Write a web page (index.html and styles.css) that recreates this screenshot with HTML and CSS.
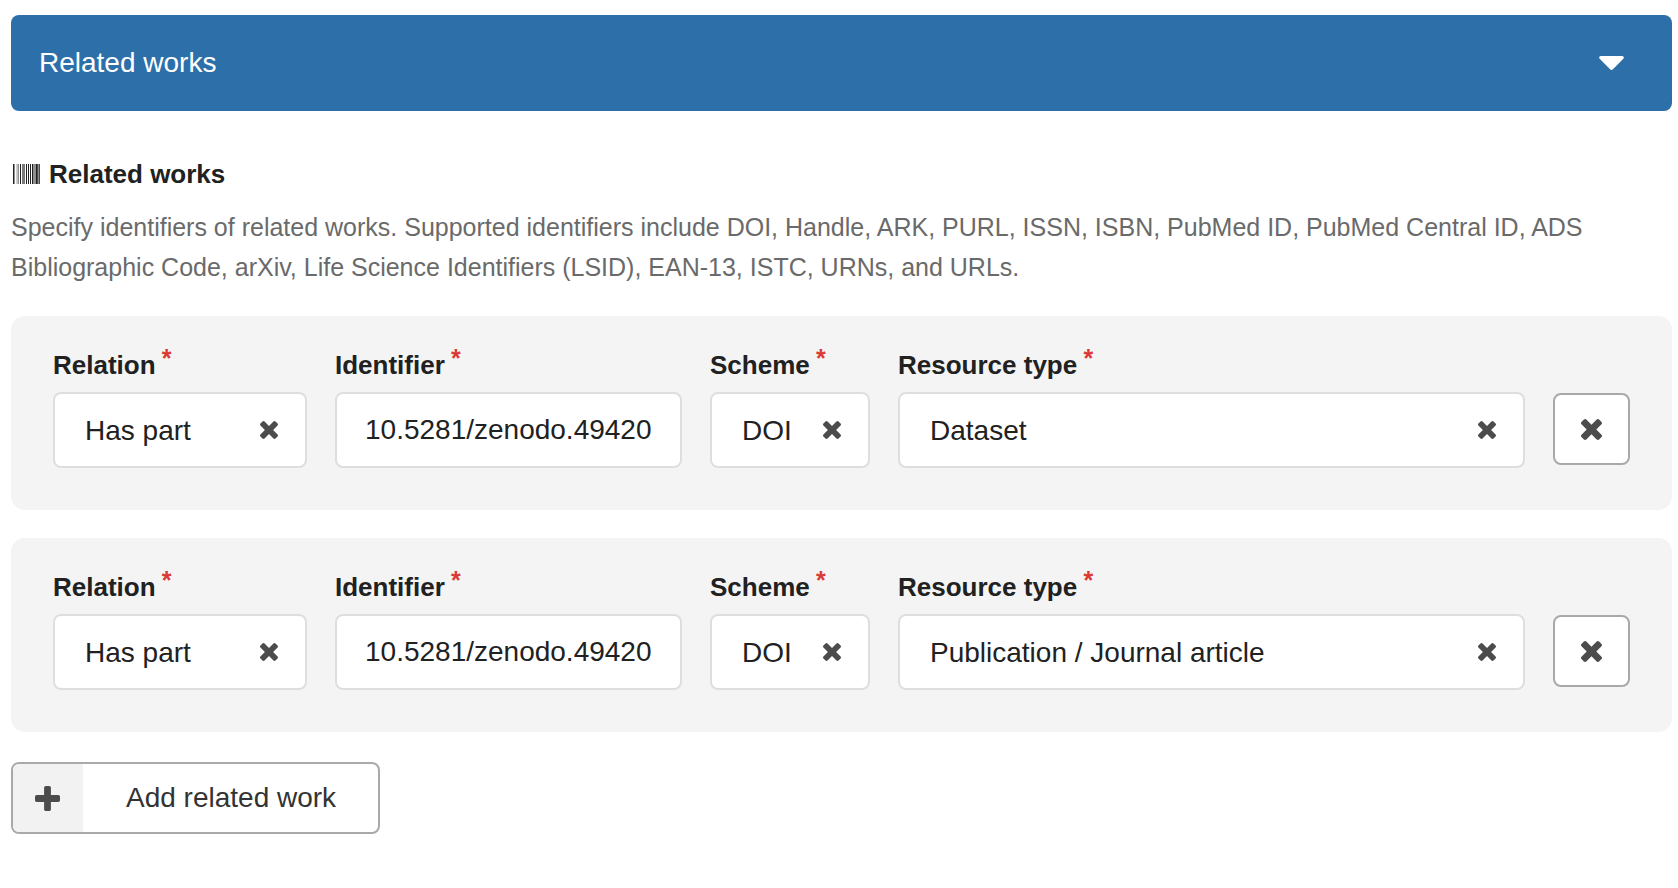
FILE: index.html
```
<!DOCTYPE html>
<html lang="en">

<head>
    <meta charset="UTF-8">
    <meta name="viewport" content="width=device-width, initial-scale=1.0">
    <title>Related works</title>
    <link rel="stylesheet" href="styles.css">
</head>

<body>
    <!-- Shared icons -->
    <svg class="sprite" aria-hidden="true">
        <symbol id="times" viewBox="302 366 1188 1188">
            <path d="M1490 1322q0 40-28 68l-136 136q-28 28-68 28t-68-28l-294-294-294 294q-28 28-68 28t-68-28l-136-136q-28-28-28-68t28-68l294-294-294-294q-28-28-28-68t28-68l136-136q28-28 68-28t68 28l294 294 294-294q28-28 68-28t68 28l136 136q28 28 28 68t-28 68l-294 294 294 294q28 28 28 68z" />
        </symbol>
        <symbol id="plus" viewBox="192 128 1408 1408">
            <path d="M1600 736v192q0 40-28 68t-68 28h-416v416q0 40-28 68t-68 28h-192q-40 0-68-28t-28-68v-416h-416q-40 0-68-28t-28-68v-192q0-40 28-68t68-28h416v-416q0-40 28-68t68-28h192q40 0 68 28t28 68v416h416q40 0 68 28t28 68z" />
        </symbol>
    </svg>

    <button class="header" type="button" aria-expanded="true">
        <span>Related works</span>
        <svg class="caret" viewBox="11 192 298 169" aria-hidden="true">
            <path d="M31.3 192h257.3c17.8 0 26.7 21.5 14.1 34.1L174.1 354.7c-7.8 7.8-20.5 7.8-28.3 0L17.2 226.1C4.6 213.5 13.5 192 31.3 192z" />
        </svg>
    </button>

    <main>
        <h2 class="title">
            <svg class="barcode" viewBox="0 0 27 20" aria-hidden="true">
                <path d="M0 0h1v20h-1zM1.5 0h.5v20h-.5zM3.8 0h.5v20h-.5zM5.2 0h.5v20h-.5zM7 0h1v20h-1zM9.2 0h.6v20h-.6zM10.2 0h.6v20h-.6zM11.2 0h.6v20h-.6zM13 0h1v20h-1zM15 0h1v20h-1zM17 0h1v20h-1zM19 0h1v20h-1zM20.4 0h.5v20h-.5zM21.5 0h1v20h-1zM23 0h1.8v20h-1.8zM25.3 0h.5v20h-.5zM26.2 0h.8v20h-.8z" />
            </svg>
            Related works
        </h2>
        <p class="help">Specify identifiers of related works. Supported identifiers include DOI, Handle, ARK, PURL, ISSN, ISBN, PubMed ID, PubMed Central ID, ADS Bibliographic Code, arXiv, Life Science Identifiers (LSID), EAN-13, ISTC, URNs, and URLs.</p>

        <div class="work">
            <div class="field">
                <label for="relation1">Relation <span class="required">*</span></label>
                <div class="dropdown">
                    <select id="relation1"><option>Has part</option></select>
                    <button class="clear" type="button" aria-label="Clear relation"><svg><use href="#times" /></svg></button>
                </div>
            </div>
            <div class="field">
                <label for="identifier1">Identifier <span class="required">*</span></label>
                <input id="identifier1" type="text" value="10.5281/zenodo.49420">
            </div>
            <div class="field">
                <label for="scheme1">Scheme <span class="required">*</span></label>
                <div class="dropdown">
                    <select id="scheme1"><option>DOI</option></select>
                    <button class="clear" type="button" aria-label="Clear scheme"><svg><use href="#times" /></svg></button>
                </div>
            </div>
            <div class="field">
                <label for="type1">Resource type <span class="required">*</span></label>
                <div class="dropdown">
                    <select id="type1"><option>Dataset</option></select>
                    <button class="clear" type="button" aria-label="Clear resource type"><svg><use href="#times" /></svg></button>
                </div>
            </div>
            <button class="remove" type="button" aria-label="Remove related work"><svg><use href="#times" /></svg></button>
        </div>

        <div class="work">
            <div class="field">
                <label for="relation2">Relation <span class="required">*</span></label>
                <div class="dropdown">
                    <select id="relation2"><option>Has part</option></select>
                    <button class="clear" type="button" aria-label="Clear relation"><svg><use href="#times" /></svg></button>
                </div>
            </div>
            <div class="field">
                <label for="identifier2">Identifier <span class="required">*</span></label>
                <input id="identifier2" type="text" value="10.5281/zenodo.49420">
            </div>
            <div class="field">
                <label for="scheme2">Scheme <span class="required">*</span></label>
                <div class="dropdown">
                    <select id="scheme2"><option>DOI</option></select>
                    <button class="clear" type="button" aria-label="Clear scheme"><svg><use href="#times" /></svg></button>
                </div>
            </div>
            <div class="field">
                <label for="type2">Resource type <span class="required">*</span></label>
                <div class="dropdown">
                    <select id="type2"><option>Publication / Journal article</option></select>
                    <button class="clear" type="button" aria-label="Clear resource type"><svg><use href="#times" /></svg></button>
                </div>
            </div>
            <button class="remove" type="button" aria-label="Remove related work"><svg><use href="#times" /></svg></button>
        </div>

        <button class="add" type="button">
            <span class="add-icon"><svg><use href="#plus" /></svg></span>
            <span class="add-text">Add related work</span>
        </button>
    </main>
</body>

</html>
```
FILE: styles.css
```
:root {
    --primary: #2d6fa8;
    --text: #212121;
    --muted: #6a6a6a;
    --icon: #4c4c4c;
    --panel: #f4f4f4;
    --border: #dededf;
    --button-border: #a9a9a9;
    --required: #db3a34;
}

* {
    box-sizing: border-box;
}

body {
    margin: 0;
    padding: 15px 6px 15px 11px;
    background-color: #fff;
    color: var(--text);
    font-family: "Liberation Sans", Arial, sans-serif;
    font-size: 26px;
}

button,
input,
select {
    font-family: inherit;
    font-size: 28px;
    color: var(--text);
    background-color: #fff;
}

button {
    padding: 0;
    cursor: pointer;
}

svg {
    display: block;
    fill: currentColor;
}

.sprite {
    display: none;
}

.header {
    display: flex;
    align-items: center;
    justify-content: space-between;
    width: 100%;
    height: 96px;
    padding: 0 48px 0 28px;
    border: none;
    border-radius: 8px;
    background-color: var(--primary);
    color: #fff;
    line-height: 34px;
}

.caret {
    width: 25px;
    height: 14px;
}

.title {
    display: flex;
    align-items: center;
    gap: 9px;
    margin: 47px 0 17px;
    padding-left: 2px;
    font-size: 26px;
    line-height: 32px;
}

.barcode {
    width: 27px;
    height: 20px;
}

.help {
    margin: 0 0 29px;
    color: var(--muted);
    font-size: 25px;
    line-height: 40px;
}

.work {
    display: grid;
    grid-template-columns: 254fr 347fr 160fr 627fr 77px;
    gap: 28px;
    align-items: end;
    margin-bottom: 28px;
    padding: 30px 42px 42px;
    border-radius: 14px;
    background-color: var(--panel);
}

.field {
    min-width: 0;
}

label {
    display: block;
    height: 36px;
    margin-bottom: 10px;
    font-weight: bold;
    line-height: 36px;
    white-space: nowrap;
}

.required {
    margin-left: -1px;
    color: var(--required);
    font-size: 25px;
    line-height: 1;
    vertical-align: 7px;
}

.dropdown {
    position: relative;
}

input,
select {
    display: block;
    width: 100%;
    height: 76px;
    padding: 0 28px;
    border: 2px solid var(--border);
    border-radius: 8px;
    appearance: none;
}

select {
    padding: 0 30px;
}

.clear {
    position: absolute;
    top: 29px;
    right: 29px;
    border: none;
    color: var(--icon);
}

.clear svg {
    width: 18px;
    height: 18px;
}

.remove,
.add {
    height: 72px;
    border: 2px solid var(--button-border);
    border-radius: 8px;
    color: var(--icon);
}

.remove {
    display: flex;
    align-items: center;
    justify-content: center;
    margin-bottom: 3px;
}

.remove svg {
    width: 21px;
    height: 21px;
}

.add {
    display: flex;
    margin-top: 30px;
    overflow: hidden;
}

.add-icon {
    display: flex;
    align-items: center;
    justify-content: center;
    width: 70px;
    height: 100%;
    padding-right: 2px;
    background-color: #f2f2f2;
}

.add-icon svg {
    width: 25px;
    height: 25px;
}

.add-text {
    align-self: center;
    padding: 0 42px 0 43px;
    color: #333;
    line-height: 34px;
}
```
